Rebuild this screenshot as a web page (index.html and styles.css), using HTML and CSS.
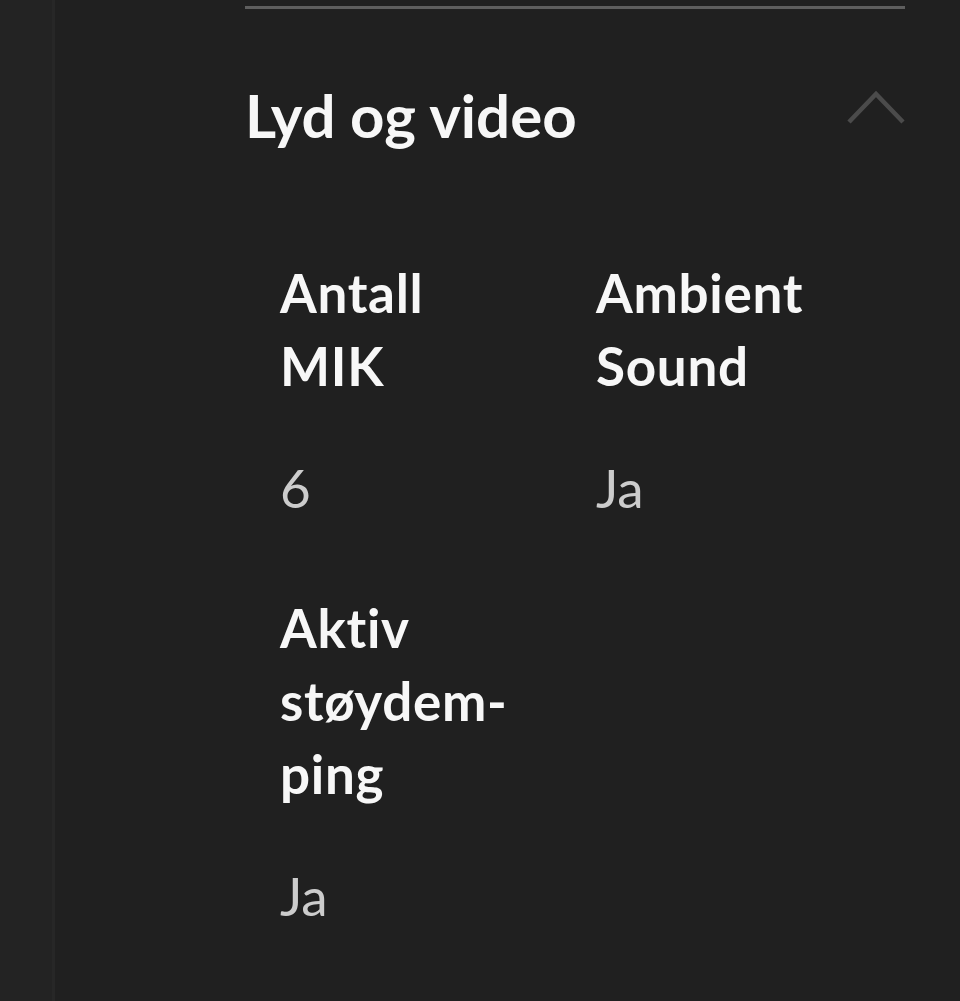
FILE: index.html
```html
<!DOCTYPE html>
<html lang="no">
<head>
<meta charset="utf-8">
<link rel="stylesheet" href="styles.css">
</head>
<body>
<div class="page">
  <div class="rail"></div>
  <main class="content">
    <div class="divider"></div>
    <div class="section-head">
      <h2 class="section-title">Lyd og video</h2>
      <svg class="chevron" width="60" height="36" viewBox="0 0 60 36" aria-hidden="true">
        <polyline points="3,31 30,3 57,31" fill="none" stroke="#4b4b4b" stroke-width="4.5"/>
      </svg>
    </div>
    <div class="specs">
      <div class="spec">
        <div class="spec-label">Antall MIK</div>
        <div class="spec-value">6</div>
      </div>
      <div class="spec">
        <div class="spec-label">Ambient Sound</div>
        <div class="spec-value">Ja</div>
      </div>
      <div class="spec">
        <div class="spec-label">Aktiv støydem&shy;ping</div>
        <div class="spec-value">Ja</div>
      </div>
    </div>
  </main>
</div>
</body>
</html>
```
FILE: styles.css
```css
html, body {
  margin: 0;
  padding: 0;
  background: #202020;
}
body {
  font-family: Lato, "Noto Sans", sans-serif;
  color: #f7f7f7;
  font-variant-ligatures: none;
}
.page {
  display: flex;
  min-height: 1001px;
}
.rail {
  width: 52px;
  flex: none;
  background: #232323;
  border-right: 3px solid #272727;
}
.content {
  flex: none;
  width: 660px;
  padding-left: 190px;
  padding-top: 6px;
}
.divider {
  height: 3px;
  background: #5e5e5e;
}
.section-head {
  display: flex;
  align-items: center;
  justify-content: space-between;
  margin-top: 70px;
}
.section-title {
  margin: 0;
  font-size: 60px;
  line-height: 72px;
  font-weight: 700;
}
.chevron {
  display: block;
  margin-right: -1px;
  margin-top: -12px;
}
.specs {
  display: grid;
  grid-template-columns: 316px 316px;
  row-gap: 67px;
  margin-top: 105px;
  padding-left: 35px;
}
.spec-label {
  width: 240px;
  font-size: 53px;
  line-height: 73px;
  font-weight: 700;
  letter-spacing: 0.7px;
  margin-bottom: 49px;
}
.spec-value {
  font-size: 53px;
  line-height: 73px;
  font-weight: 400;
  color: #cccccc;
}
```
